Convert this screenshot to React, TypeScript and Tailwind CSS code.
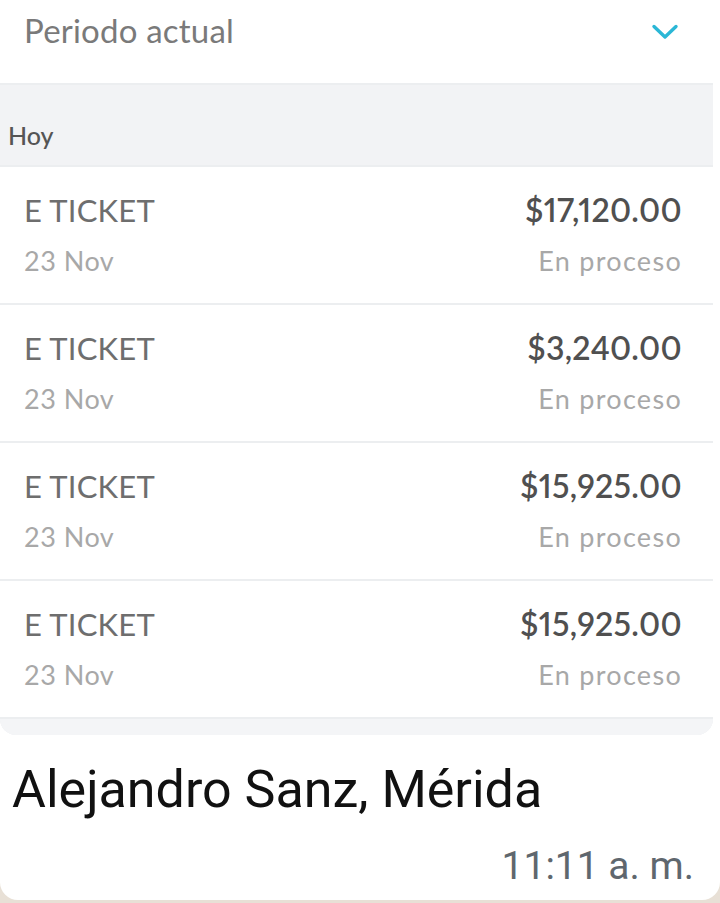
const rows = [
  { amount: "$17,120.00" },
  { amount: "$3,240.00" },
  { amount: "$15,925.00" },
  { amount: "$15,925.00" },
];

function Chevron() {
  return (
    <svg width="28" height="18" viewBox="0 0 28 18" fill="none" className="mt-[23px]">
      <path d="M3 3.5 L14 14 L25 3.5" stroke="#2bb7d6" strokeWidth="3.4" strokeLinecap="round" strokeLinejoin="round" />
    </svg>
  );
}

function TicketRow({ amount }: { amount: string }) {
  return (
    <div className="flex h-[136px] items-stretch justify-between bg-white px-6 pt-[26px]">
      <div className="flex flex-col">
        <span className="text-[31px] leading-[34px] tracking-[0.2px] text-[#6e6e6e]">E TICKET</span>
        <span className="mt-[20px] text-[27px] leading-[28px] tracking-[0.5px] text-[#a8a8a8]">23 Nov</span>
      </div>
      <div className="flex flex-col items-end pr-[7px]">
        <span className="text-[32px] font-semibold leading-[34px] tracking-[0.3px] text-[#505050] proportional-nums">{amount}</span>
        <span className="mt-[20px] text-[27px] leading-[28px] tracking-[1.3px] text-[#a8a8a8]">En proceso</span>
      </div>
    </div>
  );
}

export default function App() {
  return (
    <div className="h-[903px] w-[720px] overflow-hidden bg-[#e8e0d6]">
      <div className="flex h-[900px] flex-col rounded-b-[18px] bg-white">
        <div className="mr-[7px] flex flex-col gap-[2px] overflow-hidden rounded-b-[16px] bg-[#eceef0] font-['Lato',sans-serif]">
          <div className="flex h-[83px] items-start justify-between bg-white pl-6 pr-[34px]">
            <span className="mt-[10px] text-[33px] leading-[40px] tracking-[0.2px] text-[#7a7a7a]">Periodo actual</span>
            <Chevron />
          </div>
          <div className="flex h-[80px] items-center bg-[#f2f3f5] pl-2 pt-[22px]">
            <span className="text-[25px] font-medium text-[#555]">Hoy</span>
          </div>
          {rows.map((r, i) => (
            <TicketRow key={i} amount={r.amount} />
          ))}
          <div className="h-[16px] bg-[#f4f5f7]" />
        </div>
        <div className="flex flex-1 flex-col px-3 font-['Roboto',sans-serif]">
          <span className="mt-[25px] text-[52px] leading-[60px] text-[#111]">Alejandro Sanz, Mérida</span>
          <span className="mt-auto mb-[12px] self-end pr-[14px] text-[39px] leading-[44px] text-[#5f676e]">11:11 a. m.</span>
        </div>
      </div>
    </div>
  );
}
